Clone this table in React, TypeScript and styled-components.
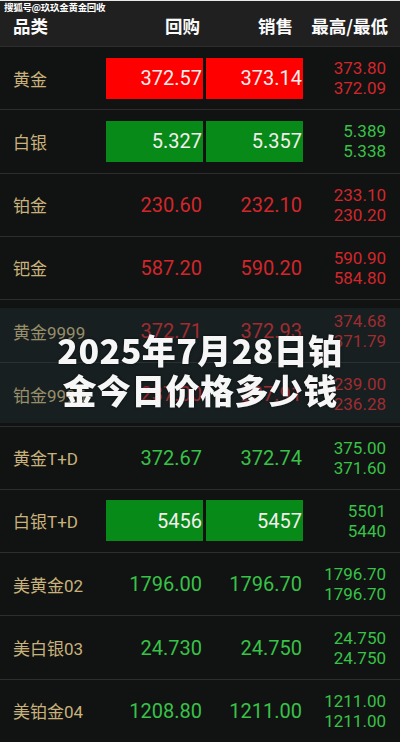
import React from 'react'
import styled, { createGlobalStyle } from 'styled-components'

const GlobalStyle = createGlobalStyle`
  html, body {
    margin: 0;
    padding: 0;
    background: #111312;
  }
  body {
    font-family: Roboto, "Noto Sans CJK SC", sans-serif;
  }
`

type Tone = 'red' | 'green'

interface IQuote {
    name: string,
    buy: string,
    sell: string,
    high: string,
    low: string,
    tone: Tone,
    boxed?: boolean
}

const quotes: IQuote[] = [
    { name: '黄金', buy: '372.57', sell: '373.14', high: '373.80', low: '372.09', tone: 'red', boxed: true },
    { name: '白银', buy: '5.327', sell: '5.357', high: '5.389', low: '5.338', tone: 'green', boxed: true },
    { name: '铂金', buy: '230.60', sell: '232.10', high: '233.10', low: '230.20', tone: 'red' },
    { name: '钯金', buy: '587.20', sell: '590.20', high: '590.90', low: '584.80', tone: 'red' },
    { name: '黄金9999', buy: '372.71', sell: '372.93', high: '374.68', low: '371.79', tone: 'red' },
    { name: '铂金9995', buy: '237.00', sell: '237.91', high: '239.00', low: '236.28', tone: 'red' },
    { name: '黄金T+D', buy: '372.67', sell: '372.74', high: '375.00', low: '371.60', tone: 'green' },
    { name: '白银T+D', buy: '5456', sell: '5457', high: '5501', low: '5440', tone: 'green', boxed: true },
    { name: '美黄金02', buy: '1796.00', sell: '1796.70', high: '1796.70', low: '1796.70', tone: 'green' },
    { name: '美白银03', buy: '24.730', sell: '24.750', high: '24.750', low: '24.750', tone: 'green' },
    { name: '美铂金04', buy: '1208.80', sell: '1211.00', high: '1211.00', low: '1211.00', tone: 'green' },
]

const textColor = { red: '#d3262b', green: '#38c248' }
const boxColor = { red: '#ff0000', green: '#078a17' }

// name | buy | sell | high/low, 3px apart
const columns = '90px 97px 97px 1fr'

const Screen = styled.div`
  position: relative;
  width: 400px;
  height: 742px;
  display: flex;
  flex-direction: column;
  background: #111312;
  overflow: hidden;
`

const Header = styled.div`
  position: relative;
  height: 46px;
  flex: none;
  display: grid;
  grid-template-columns: ${columns};
  column-gap: 3px;
  align-items: center;
  padding: 0 12px 0 13px;
  background: #1f201f;
  border-top: 1px solid #e8e8e8;
  box-sizing: border-box;
  color: #fafafa;
  font-family: "Noto Sans CJK SC", sans-serif;
  font-weight: 700;
  font-size: 17.5px;
`

const HeadCell = styled.div<{ $right?: boolean, $pad?: number }>`
  text-align: ${p => p.$right ? 'right' : 'left'};
  padding-right: ${p => p.$pad || 0}px;
  padding-top: 3px;
  white-space: nowrap;
`

const Watermark = styled.div`
  position: absolute;
  left: 4px;
  top: 0px;
  font-family: "Noto Sans CJK SC", sans-serif;
  font-size: 9.5px;
  font-weight: 700;
  line-height: 12px;
  color: #ffffff;
  letter-spacing: -0.3px;
`

const Row = styled.div`
  flex: 1;
  display: grid;
  grid-template-columns: ${columns};
  column-gap: 3px;
  align-items: center;
  padding: 0 14px 0 13px;
  border-top: 1px solid #2c2d2c;
`

const Name = styled.div`
  font-family: Roboto, "Noto Sans CJK SC", sans-serif;
  font-size: 17px;
  color: #c8b27c;
  white-space: nowrap;
`

const Price = styled.div<{ $tone: Tone, $boxed?: boolean }>`
  height: 41px;
  display: flex;
  align-items: center;
  justify-content: flex-end;
  padding-right: 1px;
  font-size: 20px;
  color: ${p => p.$boxed ? '#f4eeee' : textColor[p.$tone]};
  background: ${p => p.$boxed ? boxColor[p.$tone] : 'transparent'};
`

const Range = styled.div<{ $tone: Tone }>`
  display: flex;
  flex-direction: column;
  align-items: flex-end;
  font-size: 17px;
  line-height: 20px;
  color: ${p => textColor[p.$tone]};
`

const Band = styled.div`
  position: absolute;
  left: 0;
  right: 0;
  top: 308px;
  height: 115px;
  background: rgba(40, 58, 66, 0.3);
  backdrop-filter: blur(0.6px);
`

const Title = styled.div`
  position: absolute;
  left: 0;
  right: 0;
  top: 330px;
  text-align: center;
  font-family: "Noto Sans CJK SC", sans-serif;
  font-weight: 900;
  font-size: 34px;
  line-height: 40px;
  letter-spacing: 0.4px;
  color: #f6f6f6;
  text-shadow: 0 0 3px rgba(0, 0, 0, 0.6);
`

const QuoteRow = (props: { q: IQuote }) => {
    const q = props.q
    return <Row>
        <Name>{q.name}</Name>
        <Price $tone={q.tone} $boxed={q.boxed}>{q.buy}</Price>
        <Price $tone={q.tone} $boxed={q.boxed}>{q.sell}</Price>
        <Range $tone={q.tone}>
            <span>{q.high}</span>
            <span>{q.low}</span>
        </Range>
    </Row>
}

const App = () => {
    return <>
        <GlobalStyle />
        <Screen>
            <Header>
                <Watermark>搜狐号@玖玖金黄金回收</Watermark>
                <HeadCell>品类</HeadCell>
                <HeadCell $right $pad={3}>回购</HeadCell>
                <HeadCell $right $pad={10}>销售</HeadCell>
                <HeadCell $right>最高/最低</HeadCell>
            </Header>
            {quotes.map(q => <QuoteRow key={q.name} q={q} />)}
            <Band />
            <Title>2025年7月28日铂<br />金今日价格多少钱</Title>
        </Screen>
    </>
}

export default App
